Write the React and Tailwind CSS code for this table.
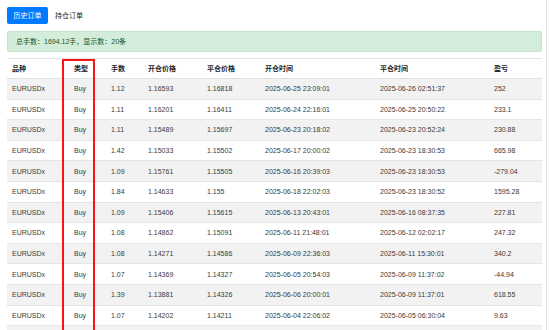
const rows = [
  ["1.12", "1.16593", "1.16818", "2025-06-25 23:09:01", "2025-06-26 02:51:37", "252"],
  ["1.11", "1.16201", "1.16411", "2025-06-24 22:16:01", "2025-06-25 20:50:22", "233.1"],
  ["1.11", "1.15489", "1.15697", "2025-06-23 20:18:02", "2025-06-23 20:52:24", "230.88"],
  ["1.42", "1.15033", "1.15502", "2025-06-17 20:00:02", "2025-06-23 18:30:53", "665.98"],
  ["1.09", "1.15761", "1.15505", "2025-06-16 20:39:03", "2025-06-23 18:30:53", "-279.04"],
  ["1.84", "1.14633", "1.155", "2025-06-18 22:02:03", "2025-06-23 18:30:52", "1595.28"],
  ["1.09", "1.15406", "1.15615", "2025-06-13 20:43:01", "2025-06-16 08:37:35", "227.81"],
  ["1.08", "1.14862", "1.15091", "2025-06-11 21:48:01", "2025-06-12 02:02:17", "247.32"],
  ["1.08", "1.14271", "1.14586", "2025-06-09 22:36:03", "2025-06-11 15:30:01", "340.2"],
  ["1.07", "1.14369", "1.14327", "2025-06-05 20:54:03", "2025-06-09 11:37:02", "-44.94"],
  ["1.39", "1.13881", "1.14326", "2025-06-06 20:00:01", "2025-06-09 11:37:01", "618.55"],
  ["1.07", "1.14202", "1.14211", "2025-06-04 22:06:02", "2025-06-05 06:30:04", "9.63"],
];

const cols = "grid grid-cols-[62px_37px_37px_59px_58px_115px_114px_53px]";

export default function App() {
  return (
    <div
      className="relative h-[330px] w-[553px] overflow-hidden bg-white text-[7px] leading-none"
      style={{ fontFamily: '"Liberation Sans", "Noto Sans CJK SC", sans-serif' }}
    >
      <div className="h-full w-[547px] border-r border-[#e3e3e3] px-[7px] pt-[7px]">
        {/* tabs */}
        <div className="flex items-center gap-[7px]">
          <button className="h-[17px] w-[41px] rounded-[2px] bg-[#007bff] text-white">历史订单</button>
          <button className="h-[17px] text-[#212529]">持仓订单</button>
        </div>

        {/* summary */}
        <div className="mt-[7px] flex h-[21px] w-[535px] items-center rounded-[2px] border border-[#c3e6cb] bg-[#d4edda] pl-[8px] text-[#155724]">
          总手数：1694.12手，显示数：20条
        </div>

        {/* table */}
        <div className="mt-[6px] w-[535px]">
          <div className={`${cols} h-[21px] items-center border-y border-[#dee2e6] font-bold text-[#212529]`}>
            <div className="pl-[5px]">品种</div>
            <div className="pl-[5px]">类型</div>
            <div className="pl-[5px]">手数</div>
            <div className="pl-[5px]">开仓价格</div>
            <div className="pl-[5px]">平仓价格</div>
            <div className="pl-[5px]">开仓时间</div>
            <div className="pl-[5px]">平仓时间</div>
            <div className="pl-[5px]">盈亏</div>
          </div>

          {rows.map((r, i) => (
            <div
              key={i}
              className={`${cols} h-[20.6px] items-center border-b border-[#e5e5e5] text-[#3a3a3a] ${
                i % 2 === 0 ? "bg-[#f2f2f2]" : "bg-white"
              }`}
            >
              <div className="pl-[5px]">EURUSDx</div>
              <div className="pl-[5px]">Buy</div>
              {r.map((c, j) => (
                <div key={j} className="pl-[5px]">{c}</div>
              ))}
            </div>
          ))}
          <div className={`${cols} h-[20.6px] bg-[#f2f2f2]`} />
        </div>
      </div>

      {/* red highlight around 类型 column */}
      <div className="absolute left-[62px] top-[59px] h-[300px] w-[33px] border-2 border-[#f5161b]" />
    </div>
  );
}
